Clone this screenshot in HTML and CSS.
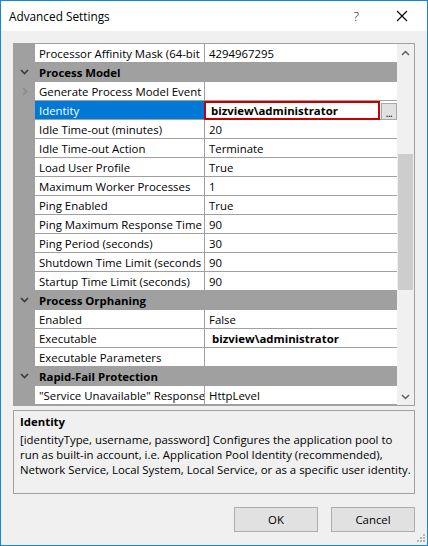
FILE: index.html
```html
<!DOCTYPE html>
<html>
<head>
<meta charset="utf-8">
<link rel="stylesheet" href="styles.css">
</head>
<body>
<div class="window">
  <div class="titlebar">
    <span class="title">Advanced Settings</span>
    <span class="help">?</span>
    <span class="close">
      <svg width="12" height="12" viewBox="0 0 12 12"><path d="M1 1 L11 11 M11 1 L1 11" stroke="#000" stroke-width="1.1" fill="none"/></svg>
    </span>
  </div>
  <div class="body">
    <div class="grid">
      <div class="rows">
        <div class="row"><div class="gut"></div><div class="name">Processor Affinity Mask (64-bit</div><div class="val">4294967295</div></div>
        <div class="row cat"><div class="gut"><svg class="chev" width="9" height="6" viewBox="0 0 9 6"><path d="M1 1 L4.5 4.5 L8 1" stroke="#3a3a3a" stroke-width="1.6" fill="none"/></svg></div><div class="catname">Process Model</div></div>
        <div class="row"><div class="gut"><svg class="chev" width="6" height="9" viewBox="0 0 6 9"><path d="M1 1 L4.5 4.5 L1 8" stroke="#8a8a8a" stroke-width="1.6" fill="none"/></svg></div><div class="name">Generate Process Model Event L</div><div class="val"></div></div>
        <div class="row"><div class="gut"></div><div class="name sel">Identity</div><div class="val edit"><div class="editbox">bizview\administrator</div><div class="dots">...</div></div></div>
        <div class="row"><div class="gut"></div><div class="name">Idle Time-out (minutes)</div><div class="val">20</div></div>
        <div class="row"><div class="gut"></div><div class="name">Idle Time-out Action</div><div class="val">Terminate</div></div>
        <div class="row"><div class="gut"></div><div class="name">Load User Profile</div><div class="val">True</div></div>
        <div class="row"><div class="gut"></div><div class="name">Maximum Worker Processes</div><div class="val">1</div></div>
        <div class="row"><div class="gut"></div><div class="name">Ping Enabled</div><div class="val">True</div></div>
        <div class="row"><div class="gut"></div><div class="name">Ping Maximum Response Time</div><div class="val">90</div></div>
        <div class="row"><div class="gut"></div><div class="name">Ping Period (seconds)</div><div class="val">30</div></div>
        <div class="row"><div class="gut"></div><div class="name">Shutdown Time Limit (seconds</div><div class="val">90</div></div>
        <div class="row"><div class="gut"></div><div class="name">Startup Time Limit (seconds)</div><div class="val">90</div></div>
        <div class="row cat"><div class="gut"><svg class="chev" width="9" height="6" viewBox="0 0 9 6"><path d="M1 1 L4.5 4.5 L8 1" stroke="#3a3a3a" stroke-width="1.6" fill="none"/></svg></div><div class="catname">Process Orphaning</div></div>
        <div class="row"><div class="gut"></div><div class="name">Enabled</div><div class="val">False</div></div>
        <div class="row"><div class="gut"></div><div class="name">Executable</div><div class="val bold">bizview\administrator</div></div>
        <div class="row"><div class="gut"></div><div class="name">Executable Parameters</div><div class="val"></div></div>
        <div class="row cat"><div class="gut"><svg class="chev" width="9" height="6" viewBox="0 0 9 6"><path d="M1 1 L4.5 4.5 L8 1" stroke="#3a3a3a" stroke-width="1.6" fill="none"/></svg></div><div class="catname">Rapid-Fail Protection</div></div>
        <div class="row"><div class="gut"></div><div class="name">"Service Unavailable" Response</div><div class="val">HttpLevel</div></div>
      </div>
      <div class="scroll">
        <div class="arrow"><svg width="9" height="6" viewBox="0 0 9 6"><path d="M1 5 L4.5 1.5 L8 5" stroke="#606060" stroke-width="1.5" fill="none"/></svg></div>
        <div class="track"><div class="thumb"></div></div>
        <div class="arrow"><svg width="9" height="6" viewBox="0 0 9 6"><path d="M1 1 L4.5 4.5 L8 1" stroke="#606060" stroke-width="1.5" fill="none"/></svg></div>
      </div>
    </div>
    <div class="desc">
      <div class="desc-title">Identity</div>
      <div class="desc-text">[identityType, username, password] Configures the application pool to<br>run as built-in account, i.e. Application Pool Identity (recommended),<br>Network Service, Local System, Local Service, or as a specific user identity.</div>
    </div>
    <div class="buttons">
      <div class="btn">OK</div>
      <div class="btn">Cancel</div>
    </div>
  </div>
  <svg class="grip" width="9" height="9" viewBox="0 0 9 9">
    <rect x="6" y="0" width="2" height="2" fill="#b4b4b4"/>
    <rect x="3" y="3" width="2" height="2" fill="#b4b4b4"/>
    <rect x="6" y="3" width="2" height="2" fill="#b4b4b4"/>
    <rect x="0" y="6" width="2" height="2" fill="#b4b4b4"/>
    <rect x="3" y="6" width="2" height="2" fill="#b4b4b4"/>
    <rect x="6" y="6" width="2" height="2" fill="#b4b4b4"/>
  </svg>
</div>
</body>
</html>
```

FILE: styles.css
```css
* { box-sizing: border-box; }
html, body { margin: 0; padding: 0; }
body {
  font-family: "Open Sans", "Noto Sans", sans-serif;
  font-size: 11.4px;
  color: #000;
  background: #f0f0f0;
}
.window {
  position: relative;
  width: 428px;
  height: 546px;
  border: 1px solid #1883d7;
  background: #f0f0f0;
  display: flex;
  flex-direction: column;
}
.titlebar {
  height: 30px;
  background: #fff;
  display: flex;
  align-items: center;
  flex: none;
}
.title {
  margin-left: 8px;
  font-size: 11.8px;
  flex: 1;
}
.help {
  font-size: 13px;
  font-weight: 300;
  color: #000;
  margin-right: 37px;
}
.close {
  width: 12px;
  height: 12px;
  margin-right: 19px;
  display: flex;
}
.body {
  padding: 12px 12px 0 12px;
  flex: 1;
  display: flex;
  flex-direction: column;
}
.grid {
  border: 1px solid #a0a0a0;
  display: flex;
  height: 363px;
  background: #fff;
}
.rows {
  width: 383px;
  background: #a0a0a0;
}
.row {
  display: flex;
  height: 19px;
  line-height: 20px;
}
.gut {
  width: 21px;
  height: 18px;
  display: flex;
  align-items: center;
  justify-content: center;
  flex: none;
}
.name {
  width: 169px;
  height: 18px;
  background: #fff;
  padding-left: 4px;
  white-space: nowrap;
  overflow: hidden;
  flex: none;
}
.name.sel {
  background: #0078d7;
  color: #fff;
}
.val {
  width: 192px;
  height: 18px;
  margin-left: 1px;
  background: #fff;
  padding-left: 4px;
  white-space: nowrap;
  overflow: hidden;
  flex: none;
}
.val.bold {
  font-weight: bold;
  padding-left: 7px;
}
.val.edit {
  padding-left: 0;
  display: flex;
  overflow: visible;
}
.editbox {
  margin-left: -1px;
  width: 176px;
  height: 19px;
  border: 2px solid #c40000;
  background: #fff;
  font-weight: bold;
  padding-left: 5px;
  line-height: 16px;
  flex: none;
}
.dots {
  width: 16px;
  height: 17px;
  margin-left: 1px;
  margin-top: 2px;
  background: #e1e1e1;
  border: 1px solid #a8a8a8;
  font-size: 10px;
  line-height: 18px;
  text-align: center;
  letter-spacing: -0.5px;
  flex: none;
}
.catname {
  font-weight: bold;
  padding-left: 4px;
  white-space: nowrap;
}
.chev { display: block; }
.scroll {
  width: 17px;
  background: #f0f0f0;
  display: flex;
  flex-direction: column;
}
.arrow {
  height: 17px;
  display: flex;
  align-items: center;
  justify-content: center;
  flex: none;
}
.track {
  flex: 1;
  padding: 93px 1px 0 1px;
}
.thumb {
  height: 136px;
  background: #cdcdcd;
}
.desc {
  margin-top: 4px;
  height: 84px;
  border: 1px solid #a0a0a0;
  padding: 3px 6px 0 6px;
  line-height: 15px;
}
.desc-title {
  font-weight: bold;
  margin-bottom: 3px;
}
.desc-text {
  white-space: nowrap;
}
.buttons {
  margin-top: 13px;
  display: flex;
  justify-content: flex-end;
  gap: 13px;
}
.btn {
  width: 84px;
  height: 25px;
  background: #e1e1e1;
  border: 1px solid #adadad;
  text-align: center;
  line-height: 23px;
}
.grip {
  position: absolute;
  right: 1px;
  bottom: 2px;
}
```
